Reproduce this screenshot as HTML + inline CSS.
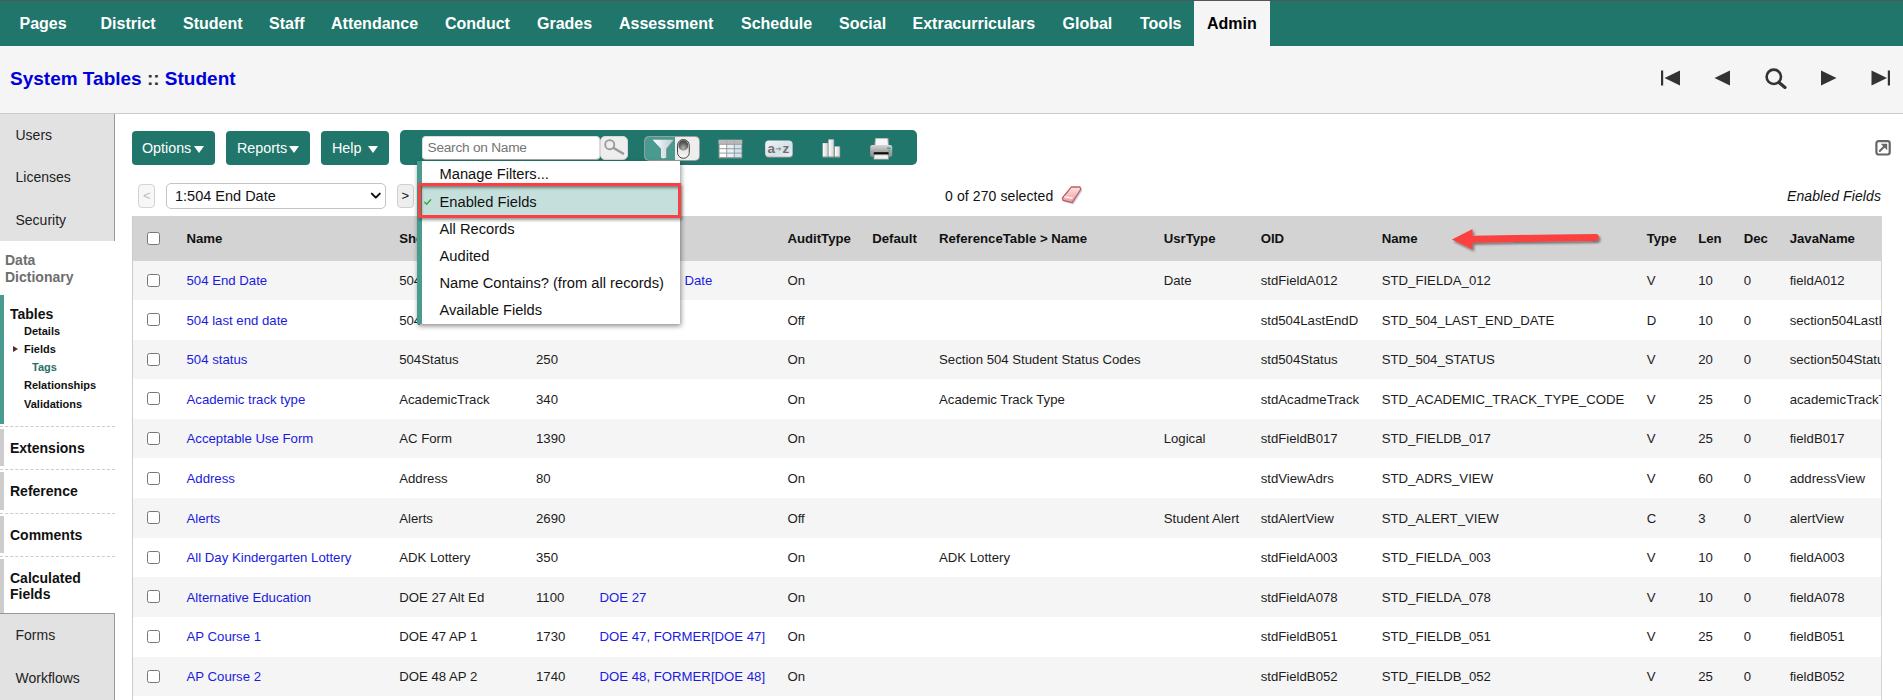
<!DOCTYPE html>
<html lang="en"><head><meta charset="utf-8"><title>System Tables :: Student</title>
<style>
html,body{margin:0;padding:0}
body{width:1903px;height:700px;overflow:hidden;background:#fff;font-family:"Liberation Sans",Arial,sans-serif;color:#000;position:relative}
.abs{position:absolute}
.t{position:absolute;white-space:nowrap;line-height:1}
#topline{left:0;top:0;width:1903px;height:1px;background:#555}
#nav{left:0;top:1px;width:1903px;height:45px;background:#20766b}
#nav .t{font-weight:bold;font-size:16px;color:#fff;top:15px}
#admintab{left:1194px;top:1px;width:76px;height:46px;background:#f5f5f5}
#hdr{left:0;top:46px;width:1903px;height:67px;background:#f5f5f5;border-bottom:1px solid #ccc}
#title{left:10px;top:69px;font-size:19px;font-weight:bold;color:#0000dd}
#title span{color:#333}
#side1{left:0;top:114px;width:114px;height:127px;background:#e2e2e2;border-right:1px solid #999}
#side2{left:0;top:613px;width:114px;height:90px;background:#e2e2e2;border-right:1px solid #999;border-top:1px solid #999}
.sn{font-size:14px;color:#222;left:15.5px}
.sb{font-size:14px;font-weight:bold;color:#111;left:10px}
.ss{font-size:11px;font-weight:bold;color:#111;left:24px}
.bar{position:absolute;left:0;width:4px;background:#ccc}
.dash{position:absolute;left:0;width:115px;height:0;border-top:1px dashed #ccc}
.btn{position:absolute;top:131px;height:34px;background:#20766b;border-radius:4px;color:#fff;font-size:14.3px}
.btn .t{top:10px}
.tri{position:absolute;width:0;height:0;border-left:5px solid transparent;border-right:5px solid transparent;border-top:7px solid #fff}
#tbl{left:132px;top:216px;width:1748px;height:490px;overflow:hidden;border-left:1px solid #ccc;border-right:1px solid #d4d4d4}
.row{position:absolute;left:0;width:1748px}
.row .t{font-size:13.2px;color:#1c1c1c}
.row a{color:#1a1ae0;text-decoration:none}
.th .t{font-weight:bold;font-size:13.2px;color:#111}
.cb{position:absolute;left:14px;width:11px;height:11px;border:1px solid #767676;border-radius:2.5px;background:#fff}
#menu{left:417px;top:160.5px;width:258px;height:163.5px;background:#fff;border-left:5px solid #4a9b8f;box-shadow:1px 2px 5px rgba(0,0,0,.45)}
#menu .t{font-size:14.7px;color:#111;left:17.5px}
</style></head><body>

<div id="topline" class="abs"></div>
<div id="nav" class="abs">
<span class="t" style="left:19.5px">Pages</span>
<span class="t" style="left:100.5px">District</span>
<span class="t" style="left:183px">Student</span>
<span class="t" style="left:269px">Staff</span>
<span class="t" style="left:331px">Attendance</span>
<span class="t" style="left:445px">Conduct</span>
<span class="t" style="left:537px">Grades</span>
<span class="t" style="left:619px">Assessment</span>
<span class="t" style="left:741px">Schedule</span>
<span class="t" style="left:839px">Social</span>
<span class="t" style="left:912.5px">Extracurriculars</span>
<span class="t" style="left:1062.5px">Global</span>
<span class="t" style="left:1140px">Tools</span>
</div>
<div id="admintab" class="abs"><span class="t" style="left:13px;top:15px;font-weight:bold;font-size:16px;color:#000">Admin</span></div>
<div id="hdr" class="abs"></div>
<div id="title" class="t">System Tables <span>::</span> Student</div>
<svg class="abs" style="left:1650px;top:60px" width="253" height="36" viewBox="0 0 253 36">
<g fill="#333">
<rect x="11" y="10.5" width="2.2" height="15"/><path d="M30 10.5 L30 25.5 L14.5 18 Z"/>
<path d="M80 10.5 L80 25.5 L64.5 18 Z"/>
<path d="M171 10.5 L171 25.5 L186.5 18 Z"/>
<path d="M221.5 10.5 L221.5 25.5 L237 18 Z"/><rect x="237.8" y="10.5" width="2.2" height="15"/>
</g>
<circle cx="123.8" cy="16.8" r="7.2" fill="none" stroke="#333" stroke-width="2.6"/>
<path d="M129 22.4 L135 27.4" stroke="#333" stroke-width="3.2" stroke-linecap="round"/>
</svg>
<div id="side1" class="abs"></div><div id="side2" class="abs"></div>
<span class="t sn" style="top:128px">Users</span>
<span class="t sn" style="top:170px">Licenses</span>
<span class="t sn" style="top:213px">Security</span>
<span class="t sn" style="top:628px">Forms</span>
<span class="t sn" style="top:671px">Workflows</span>
<span class="t" style="left:5px;top:252px;font-size:14px;font-weight:bold;color:#6e6e6e;line-height:17px;white-space:normal;width:90px">Data Dictionary</span>
<div class="bar" style="top:295px;height:129px;background:#4a9b8f"></div>
<span class="t sb" style="top:307px">Tables</span>
<span class="t ss" style="top:326px;left:24px;color:#111">Details</span>
<span class="t ss" style="top:344px;left:24px;color:#111">Fields</span>
<span class="t ss" style="top:362px;left:32px;color:#2a6e66">Tags</span>
<span class="t ss" style="top:380px;left:24px;color:#111">Relationships</span>
<span class="t ss" style="top:399px;left:24px;color:#111">Validations</span>
<div class="abs" style="left:13px;top:345.5px;width:0;height:0;border-top:3.5px solid transparent;border-bottom:3.5px solid transparent;border-left:5px solid #5a2a2a"></div>
<div class="dash" style="top:426px"></div>
<div class="dash" style="top:469px"></div>
<div class="dash" style="top:513px"></div>
<div class="dash" style="top:556px"></div>
<div class="bar" style="top:429px;height:37px"></div>
<div class="bar" style="top:472px;height:38px"></div>
<div class="bar" style="top:516px;height:37px"></div>
<div class="bar" style="top:559px;height:54px"></div>
<span class="t sb" style="top:441px">Extensions</span>
<span class="t sb" style="top:484px">Reference</span>
<span class="t sb" style="top:528px">Comments</span>
<span class="t sb" style="top:570px;line-height:16px;white-space:normal;width:90px">Calculated Fields</span>
<div class="btn" style="left:132px;width:83px"><span class="t" style="left:10px">Options</span><div class="tri" style="left:61.5px;top:15px"></div></div>
<div class="btn" style="left:226px;width:84px"><span class="t" style="left:11px">Reports</span><div class="tri" style="left:63px;top:15px"></div></div>
<div class="btn" style="left:321px;width:68px"><span class="t" style="left:11px">Help</span><div class="tri" style="left:47px;top:15px"></div></div>
<div class="btn" style="left:400px;top:130px;width:517px;height:35px;border-radius:5px"></div>

<div class="abs" style="left:422px;top:136px;width:177.5px;height:24px;box-sizing:border-box;background:#fff;border:1px solid #dcdcdc;border-bottom-color:#a9a9a9;border-radius:4px"></div>
<span class="t" style="left:427.5px;top:141px;font-size:13.7px;letter-spacing:-0.25px;color:#757575">Search on Name</span>
<div class="abs" style="left:600px;top:136px;width:28px;height:23.5px;box-sizing:border-box;background:#eee;border:1px solid #d8d8d8;border-radius:5px"></div>
<svg class="abs" style="left:600px;top:136px" width="28" height="24" viewBox="0 0 28 24">
<circle cx="9.75" cy="8.7" r="4.55" fill="none" stroke="#9a9a9a" stroke-width="1.8"/>
<path d="M13.6 12 L23 17.5" stroke="#9a9a9a" stroke-width="2.6" stroke-linecap="round"/>
</svg>
<div class="abs" style="left:644px;top:136px;width:55.5px;height:24.5px;box-sizing:border-box;background:#eee;border:1px solid rgba(130,130,130,.75);border-radius:5px;overflow:hidden"><div class="abs" style="left:0;top:0;width:29.5px;height:25px;background:#4a9b8f"></div></div>
<svg class="abs" style="left:644px;top:136px" width="56" height="25" viewBox="0 0 56 25">
<defs>
<linearGradient id="fg" x1="0" y1="0" x2="1" y2="0"><stop offset="0" stop-color="#ffffff"/><stop offset="1" stop-color="#b8cad6"/></linearGradient>
<radialGradient id="bg" cx="0.5" cy="0.75" r="0.7"><stop offset="0" stop-color="#b5b5b5"/><stop offset="0.6" stop-color="#666"/><stop offset="1" stop-color="#444"/></radialGradient>
<linearGradient id="pg" x1="0" y1="0" x2="0" y2="1"><stop offset="0" stop-color="#ccc"/><stop offset="1" stop-color="#fafafa"/></linearGradient>
</defs>
<path d="M9.2 4.6 L30.2 4.6 L22.8 13.4 L22.8 22.4 L20 23 L17.4 22.4 L17.4 13.4 Z" fill="#7d8a8a" opacity="0.8"/>
<path d="M8.6 3.8 L29.6 3.8 L22.2 12.8 L22.2 21.8 L19.6 22.4 L17 21.8 L17 12.8 Z" fill="url(#fg)"/>
<rect x="33.5" y="3.5" width="11.8" height="18.8" rx="5.9" fill="url(#pg)" stroke="#444" stroke-width="1"/>
<ellipse cx="39.4" cy="9.4" rx="4.9" ry="5.1" fill="url(#bg)"/>
</svg>
<svg class="abs" style="left:715.7px;top:135.5px" width="30" height="25" viewBox="0 0 30 25">
<rect x="2.6" y="3.8" width="23.6" height="18.6" fill="#9a9a9a"/>
<rect x="2.6" y="3.8" width="23.6" height="4" fill="#b9b9b9"/>
<g fill="#fff"><rect x="3.6" y="8.8" width="6.6" height="3.4"/><rect x="3.6" y="13.2" width="6.6" height="3.4"/><rect x="3.6" y="17.6" width="6.6" height="3.4"/></g>
<g fill="#e4f0fa"><rect x="11.2" y="8.8" width="6.6" height="3.4"/><rect x="11.2" y="13.2" width="6.6" height="3.4"/><rect x="11.2" y="17.6" width="6.6" height="3.4"/></g>
<g fill="#cfe3f3"><rect x="18.8" y="8.8" width="6.6" height="3.4"/><rect x="18.8" y="13.2" width="6.6" height="3.4"/><rect x="18.8" y="17.6" width="6.6" height="3.4"/></g>
<g fill="#a8a8a8"><rect x="10.2" y="3.8" width="1" height="4"/><rect x="17.8" y="3.8" width="1" height="4"/></g>
</svg>
<svg class="abs" style="left:762px;top:137px" width="34" height="24" viewBox="0 0 34 24">
<defs><linearGradient id="az" x1="0" y1="0" x2="1" y2="1"><stop offset="0" stop-color="#f4f6f8"/><stop offset="0.6" stop-color="#d5e0e8"/><stop offset="1" stop-color="#eef2f5"/></linearGradient></defs>
<rect x="3.6" y="4" width="27.4" height="16.8" rx="3.5" fill="#8d8d8d"/>
<rect x="3.2" y="3.4" width="27.2" height="16.4" rx="3.5" fill="url(#az)"/>
<text x="5.4" y="15.6" font-family="Liberation Sans, Arial, sans-serif" font-weight="bold" font-size="13.5" fill="#707070">a</text>
<text x="13.2" y="14.2" font-family="DejaVu Sans, Liberation Sans, sans-serif" font-weight="bold" font-size="7" fill="#808080">→</text>
<text x="20.4" y="15.6" font-family="Liberation Sans, Arial, sans-serif" font-weight="bold" font-size="13.5" fill="#707070">z</text>
</svg>
<svg class="abs" style="left:818px;top:136px" width="26" height="25" viewBox="0 0 26 25">
<defs><linearGradient id="bc" x1="0" y1="0" x2="1" y2="0"><stop offset="0" stop-color="#ffffff"/><stop offset="1" stop-color="#d4d4d4"/></linearGradient></defs>
<g fill="#8f9c9a"><rect x="4.6" y="7" width="5.6" height="14.6"/><rect x="10.4" y="3.4" width="5.8" height="18.2"/><rect x="16.6" y="10.4" width="5.6" height="11.2"/></g>
<g fill="url(#bc)"><rect x="4.8" y="7.2" width="4.8" height="13.2"/><rect x="10.6" y="3.6" width="5" height="16.8"/><rect x="16.8" y="10.6" width="4.8" height="9.8"/></g>
</svg>
<svg class="abs" style="left:866px;top:135px" width="30" height="27" viewBox="0 0 30 27">
<defs><linearGradient id="pb" x1="0" y1="0" x2="0" y2="1"><stop offset="0" stop-color="#d6d6d6"/><stop offset="0.5" stop-color="#a9a9a9"/><stop offset="1" stop-color="#8a8a8a"/></linearGradient></defs>
<path d="M9 3 L22.4 3 L23 11 L8.4 11 Z" fill="#a8a8a8"/>
<path d="M10 3.8 L21.4 3.8 L22 10.6 L9.4 10.6 Z" fill="#f6f6f6"/>
<rect x="4.2" y="10" width="22" height="12" rx="2" fill="url(#pb)"/>
<rect x="7.8" y="17.2" width="14.8" height="2.4" fill="#0a0a0a"/>
<path d="M8.4 19.8 L22 19.8 L22.6 24.2 L7.8 24.2 Z" fill="#f2f2f2" stroke="#9a9a9a" stroke-width="0.6"/>
<rect x="21" y="12.6" width="3.6" height="1.3" fill="#2f8fe0"/>
<rect x="22" y="15.2" width="2.8" height="1.2" fill="#4fc04a"/>
</svg>


<div class="abs" style="left:138px;top:184px;width:17px;height:24px;box-sizing:border-box;background:#f7f7f7;border:1px solid #d4d4d4;border-radius:4px"></div>
<span class="t" style="left:143px;top:188.5px;font-size:13px;color:#bdbdbd">&lt;</span>
<div class="abs" style="left:166px;top:183px;width:220px;height:26px;box-sizing:border-box;background:#fff;border:1px solid #c4c4c4;border-radius:5px"></div>
<span class="t" style="left:175px;top:188.5px;font-size:14.5px;color:#111">1:504 End Date</span>
<svg class="abs" style="left:368px;top:189px" width="16" height="14" viewBox="0 0 16 14"><path d="M3.8 4.6 L7.8 8.6 L11.8 4.6" fill="none" stroke="#111" stroke-width="2" stroke-linecap="round" stroke-linejoin="round"/></svg>
<div class="abs" style="left:397px;top:184px;width:17px;height:24px;box-sizing:border-box;background:#eee;border:1px solid #cfcfcf;border-radius:4px"></div>
<span class="t" style="left:401.5px;top:188.5px;font-size:13px;color:#111">&gt;</span>
<span class="t" style="left:945px;top:189px;font-size:14px;letter-spacing:0.1px;color:#111">0 of 270 selected</span>
<svg class="abs" style="left:1058px;top:183px" width="28" height="24" viewBox="0 0 28 24">
<defs><linearGradient id="er" x1="0" y1="0" x2="0" y2="1"><stop offset="0" stop-color="#fbe3e3"/><stop offset="1" stop-color="#ec9d9d"/></linearGradient></defs>
<path d="M5.4 18.2 L14.8 20.6 L23.4 7 L22.6 4.4 L13.6 4.2 L4.8 15.6 Z" fill="#9db7dd" opacity="0.55" transform="translate(0.8,0.9)"/>
<path d="M5 17.4 L14.2 19.6 L22.8 6.4 L22 4 L13.4 3.8 L4.4 15 Z" fill="url(#er)" stroke="#bf5f5f" stroke-width="1.3" stroke-linejoin="round"/>
<path d="M6.4 13.6 L14.4 15.2" stroke="#fff" stroke-width="1.4" opacity="0.9"/>
</svg>
<span class="t" style="left:1787px;top:189px;font-size:14px;letter-spacing:0.1px;font-style:italic;color:#111">Enabled Fields</span>
<svg class="abs" style="left:1872px;top:137px" width="22" height="22" viewBox="0 0 22 22">
<rect x="4.4" y="4.1" width="13.3" height="13.4" rx="2.2" fill="#fff" stroke="#666" stroke-width="2.2"/>
<path d="M7.8 14 L13 8.8" stroke="#666" stroke-width="2" stroke-linecap="round"/>
<path d="M8.8 6.8 L15.2 6.8 L15.2 13.2 Z" fill="#666"/>
</svg>

<div id="tbl" class="abs">
<div class="row th" style="top:0;height:44.5px;background:#d3d3d3">
<div class="cb" style="top:16px"></div>
<span class="t" style="left:53.5px;top:16px">Name</span>
<span class="t" style="left:266.2px;top:16px">ShortName</span>
<span class="t" style="left:403.0px;top:16px">Seq</span>
<span class="t" style="left:466.5px;top:16px">Alias</span>
<span class="t" style="left:654.4px;top:16px">AuditType</span>
<span class="t" style="left:739.2px;top:16px">Default</span>
<span class="t" style="left:806.0px;top:16px">ReferenceTable &gt; Name</span>
<span class="t" style="left:1030.7px;top:16px">UsrType</span>
<span class="t" style="left:1127.7px;top:16px">OID</span>
<span class="t" style="left:1248.7px;top:16px">Name</span>
<span class="t" style="left:1513.7px;top:16px">Type</span>
<span class="t" style="left:1565.2px;top:16px">Len</span>
<span class="t" style="left:1610.7px;top:16px">Dec</span>
<span class="t" style="left:1656.7px;top:16px">JavaName</span>
</div>
<div class="row" style="top:44.5px;height:39.6px;background:#f5f5f5">
<div class="cb" style="top:13px"></div>
<span class="t" style="left:53.5px;top:13.5px"><a>504 End Date</a></span>
<span class="t" style="left:266.2px;top:13.5px">504</span>
<span class="t" style="right:1168.7px;top:13.5px;word-spacing:3px"><a>DOE 504 End Date</a></span>
<span class="t" style="left:654.4px;top:13.5px">On</span>
<span class="t" style="left:1030.7px;top:13.5px">Date</span>
<span class="t" style="left:1127.7px;top:13.5px">stdFieldA012</span>
<span class="t" style="left:1248.7px;top:13.5px">STD_FIELDA_012</span>
<span class="t" style="left:1513.7px;top:13.5px">V</span>
<span class="t" style="left:1565.2px;top:13.5px">10</span>
<span class="t" style="left:1610.7px;top:13.5px">0</span>
<span class="t" style="left:1656.7px;top:13.5px">fieldA012</span>
</div>
<div class="row" style="top:84.1px;height:39.6px;background:#fff">
<div class="cb" style="top:13px"></div>
<span class="t" style="left:53.5px;top:13.5px"><a>504 last end date</a></span>
<span class="t" style="left:266.2px;top:13.5px">504</span>
<span class="t" style="left:654.4px;top:13.5px">Off</span>
<span class="t" style="left:1127.7px;top:13.5px">std504LastEndD</span>
<span class="t" style="left:1248.7px;top:13.5px">STD_504_LAST_END_DATE</span>
<span class="t" style="left:1513.7px;top:13.5px">D</span>
<span class="t" style="left:1565.2px;top:13.5px">10</span>
<span class="t" style="left:1610.7px;top:13.5px">0</span>
<span class="t" style="left:1656.7px;top:13.5px">section504LastEndDate</span>
</div>
<div class="row" style="top:123.7px;height:39.6px;background:#f5f5f5">
<div class="cb" style="top:13px"></div>
<span class="t" style="left:53.5px;top:13.5px"><a>504 status</a></span>
<span class="t" style="left:266.2px;top:13.5px">504Status</span>
<span class="t" style="left:403.0px;top:13.5px">250</span>
<span class="t" style="left:654.4px;top:13.5px">On</span>
<span class="t" style="left:806.0px;top:13.5px">Section 504 Student Status Codes</span>
<span class="t" style="left:1127.7px;top:13.5px">std504Status</span>
<span class="t" style="left:1248.7px;top:13.5px">STD_504_STATUS</span>
<span class="t" style="left:1513.7px;top:13.5px">V</span>
<span class="t" style="left:1565.2px;top:13.5px">20</span>
<span class="t" style="left:1610.7px;top:13.5px">0</span>
<span class="t" style="left:1656.7px;top:13.5px">section504Status</span>
</div>
<div class="row" style="top:163.3px;height:39.6px;background:#fff">
<div class="cb" style="top:13px"></div>
<span class="t" style="left:53.5px;top:13.5px"><a>Academic track type</a></span>
<span class="t" style="left:266.2px;top:13.5px">AcademicTrack</span>
<span class="t" style="left:403.0px;top:13.5px">340</span>
<span class="t" style="left:654.4px;top:13.5px">On</span>
<span class="t" style="left:806.0px;top:13.5px">Academic Track Type</span>
<span class="t" style="left:1127.7px;top:13.5px">stdAcadmeTrack</span>
<span class="t" style="left:1248.7px;top:13.5px">STD_ACADEMIC_TRACK_TYPE_CODE</span>
<span class="t" style="left:1513.7px;top:13.5px">V</span>
<span class="t" style="left:1565.2px;top:13.5px">25</span>
<span class="t" style="left:1610.7px;top:13.5px">0</span>
<span class="t" style="left:1656.7px;top:13.5px">academicTrackType</span>
</div>
<div class="row" style="top:202.9px;height:39.6px;background:#f5f5f5">
<div class="cb" style="top:13px"></div>
<span class="t" style="left:53.5px;top:13.5px"><a>Acceptable Use Form</a></span>
<span class="t" style="left:266.2px;top:13.5px">AC Form</span>
<span class="t" style="left:403.0px;top:13.5px">1390</span>
<span class="t" style="left:654.4px;top:13.5px">On</span>
<span class="t" style="left:1030.7px;top:13.5px">Logical</span>
<span class="t" style="left:1127.7px;top:13.5px">stdFieldB017</span>
<span class="t" style="left:1248.7px;top:13.5px">STD_FIELDB_017</span>
<span class="t" style="left:1513.7px;top:13.5px">V</span>
<span class="t" style="left:1565.2px;top:13.5px">25</span>
<span class="t" style="left:1610.7px;top:13.5px">0</span>
<span class="t" style="left:1656.7px;top:13.5px">fieldB017</span>
</div>
<div class="row" style="top:242.5px;height:39.6px;background:#fff">
<div class="cb" style="top:13px"></div>
<span class="t" style="left:53.5px;top:13.5px"><a>Address</a></span>
<span class="t" style="left:266.2px;top:13.5px">Address</span>
<span class="t" style="left:403.0px;top:13.5px">80</span>
<span class="t" style="left:654.4px;top:13.5px">On</span>
<span class="t" style="left:1127.7px;top:13.5px">stdViewAdrs</span>
<span class="t" style="left:1248.7px;top:13.5px">STD_ADRS_VIEW</span>
<span class="t" style="left:1513.7px;top:13.5px">V</span>
<span class="t" style="left:1565.2px;top:13.5px">60</span>
<span class="t" style="left:1610.7px;top:13.5px">0</span>
<span class="t" style="left:1656.7px;top:13.5px">addressView</span>
</div>
<div class="row" style="top:282.1px;height:39.6px;background:#f5f5f5">
<div class="cb" style="top:13px"></div>
<span class="t" style="left:53.5px;top:13.5px"><a>Alerts</a></span>
<span class="t" style="left:266.2px;top:13.5px">Alerts</span>
<span class="t" style="left:403.0px;top:13.5px">2690</span>
<span class="t" style="left:654.4px;top:13.5px">Off</span>
<span class="t" style="left:1030.7px;top:13.5px">Student Alert</span>
<span class="t" style="left:1127.7px;top:13.5px">stdAlertView</span>
<span class="t" style="left:1248.7px;top:13.5px">STD_ALERT_VIEW</span>
<span class="t" style="left:1513.7px;top:13.5px">C</span>
<span class="t" style="left:1565.2px;top:13.5px">3</span>
<span class="t" style="left:1610.7px;top:13.5px">0</span>
<span class="t" style="left:1656.7px;top:13.5px">alertView</span>
</div>
<div class="row" style="top:321.7px;height:39.6px;background:#fff">
<div class="cb" style="top:13px"></div>
<span class="t" style="left:53.5px;top:13.5px"><a>All Day Kindergarten Lottery</a></span>
<span class="t" style="left:266.2px;top:13.5px">ADK Lottery</span>
<span class="t" style="left:403.0px;top:13.5px">350</span>
<span class="t" style="left:654.4px;top:13.5px">On</span>
<span class="t" style="left:806.0px;top:13.5px">ADK Lottery</span>
<span class="t" style="left:1127.7px;top:13.5px">stdFieldA003</span>
<span class="t" style="left:1248.7px;top:13.5px">STD_FIELDA_003</span>
<span class="t" style="left:1513.7px;top:13.5px">V</span>
<span class="t" style="left:1565.2px;top:13.5px">10</span>
<span class="t" style="left:1610.7px;top:13.5px">0</span>
<span class="t" style="left:1656.7px;top:13.5px">fieldA003</span>
</div>
<div class="row" style="top:361.3px;height:39.6px;background:#f5f5f5">
<div class="cb" style="top:13px"></div>
<span class="t" style="left:53.5px;top:13.5px"><a>Alternative Education</a></span>
<span class="t" style="left:266.2px;top:13.5px">DOE 27 Alt Ed</span>
<span class="t" style="left:403.0px;top:13.5px">1100</span>
<span class="t" style="left:466.5px;top:13.5px"><a>DOE 27</a></span>
<span class="t" style="left:654.4px;top:13.5px">On</span>
<span class="t" style="left:1127.7px;top:13.5px">stdFieldA078</span>
<span class="t" style="left:1248.7px;top:13.5px">STD_FIELDA_078</span>
<span class="t" style="left:1513.7px;top:13.5px">V</span>
<span class="t" style="left:1565.2px;top:13.5px">10</span>
<span class="t" style="left:1610.7px;top:13.5px">0</span>
<span class="t" style="left:1656.7px;top:13.5px">fieldA078</span>
</div>
<div class="row" style="top:400.9px;height:39.6px;background:#fff">
<div class="cb" style="top:13px"></div>
<span class="t" style="left:53.5px;top:13.5px"><a>AP Course 1</a></span>
<span class="t" style="left:266.2px;top:13.5px">DOE 47 AP 1</span>
<span class="t" style="left:403.0px;top:13.5px">1730</span>
<span class="t" style="left:466.5px;top:13.5px"><a>DOE 47, FORMER[DOE 47]</a></span>
<span class="t" style="left:654.4px;top:13.5px">On</span>
<span class="t" style="left:1127.7px;top:13.5px">stdFieldB051</span>
<span class="t" style="left:1248.7px;top:13.5px">STD_FIELDB_051</span>
<span class="t" style="left:1513.7px;top:13.5px">V</span>
<span class="t" style="left:1565.2px;top:13.5px">25</span>
<span class="t" style="left:1610.7px;top:13.5px">0</span>
<span class="t" style="left:1656.7px;top:13.5px">fieldB051</span>
</div>
<div class="row" style="top:440.5px;height:39.6px;background:#f5f5f5">
<div class="cb" style="top:13px"></div>
<span class="t" style="left:53.5px;top:13.5px"><a>AP Course 2</a></span>
<span class="t" style="left:266.2px;top:13.5px">DOE 48 AP 2</span>
<span class="t" style="left:403.0px;top:13.5px">1740</span>
<span class="t" style="left:466.5px;top:13.5px"><a>DOE 48, FORMER[DOE 48]</a></span>
<span class="t" style="left:654.4px;top:13.5px">On</span>
<span class="t" style="left:1127.7px;top:13.5px">stdFieldB052</span>
<span class="t" style="left:1248.7px;top:13.5px">STD_FIELDB_052</span>
<span class="t" style="left:1513.7px;top:13.5px">V</span>
<span class="t" style="left:1565.2px;top:13.5px">25</span>
<span class="t" style="left:1610.7px;top:13.5px">0</span>
<span class="t" style="left:1656.7px;top:13.5px">fieldB052</span>
</div>
</div>
<div id="menu" class="abs">
<span class="t" style="top:6.5px">Manage Filters...</span>
<div class="abs" style="left:0;top:25px;width:259px;height:30px;background:#c5e0dc"></div>
<span class="t" style="top:34.5px">Enabled Fields</span>
<span class="t" style="top:61.5px">All Records</span>
<span class="t" style="top:88px">Audited</span>
<span class="t" style="top:115.5px">Name Contains? (from all records)</span>
<span class="t" style="top:142px">Available Fields</span>
</div>

<svg class="abs" style="left:1440px;top:220px;overflow:visible" width="175" height="40" viewBox="0 0 175 40">
<defs><filter id="sh" x="-10%" y="-30%" width="120%" height="180%"><feDropShadow dx="1.5" dy="2" stdDeviation="1.3" flood-color="#000" flood-opacity="0.45"/></filter></defs>
<g filter="url(#sh)" fill="#fb4141" stroke="none">
<path d="M11.9 19.5 L32.6 8.9 L32.6 29.5 Z"/>
<path d="M32 19.2 L155.5 17.4" stroke="#fb4141" stroke-width="7" stroke-linecap="round" fill="none"/>
</g>
</svg>
<svg class="abs" style="left:422px;top:196px" width="12" height="12" viewBox="0 0 12 12"><path d="M2.8 6.3 L4.6 8.2 L8.7 3.7" fill="none" stroke="#35a835" stroke-width="1.35" stroke-linecap="round" stroke-linejoin="round"/></svg>
<div class="abs" style="left:418px;top:183px;width:263px;height:35px;box-sizing:border-box;border:3px solid #fa4141;box-shadow:1px 2px 3px rgba(0,0,0,.42), inset 1.5px 3px 3px -1px rgba(0,0,0,.42)"></div>

</body></html>
